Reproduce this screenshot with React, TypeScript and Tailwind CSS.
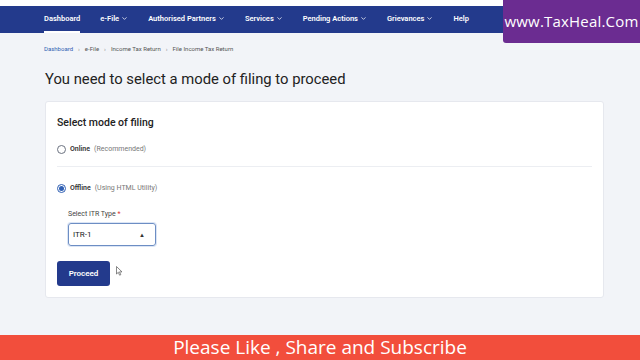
import { ChevronDown } from "lucide-react";

const navItems: { label: string; menu: boolean }[] = [
  { label: "Dashboard", menu: false },
  { label: "e-File", menu: true },
  { label: "Authorised Partners", menu: true },
  { label: "Services", menu: true },
  { label: "Pending Actions", menu: true },
  { label: "Grievances", menu: true },
  { label: "Help", menu: false },
];

const crumbs = ["Dashboard", "e-File", "Income Tax Return", "File Income Tax Return"];

function Radio({ checked }: { checked: boolean }) {
  return (
    <span
      className={`flex h-[9px] w-[9px] shrink-0 items-center justify-center rounded-full border ${
        checked ? "border-[#2f5fb3]" : "border-[#6b7280]"
      }`}
    >
      {checked && <span className="h-[5px] w-[5px] rounded-full bg-[#2f5fb3]" />}
    </span>
  );
}

export default function App() {
  return (
    <div className="relative flex h-[360px] w-[640px] flex-col overflow-hidden bg-[#f2f4f8] font-['Roboto',sans-serif]">
      <div className="h-[6px] bg-white" />
      <nav className="flex h-[27px] items-stretch gap-[20px] bg-[#233a8c] pl-[44px]">
        {navItems.map((item, i) => (
          <div
            key={item.label}
            className={`flex items-center gap-[2px] border-b-2 text-[7.5px] font-semibold text-white ${
              i === 0 ? "border-white" : "border-transparent"
            }`}
          >
            {item.label}
            {item.menu && <ChevronDown className="h-[7px] w-[7px]" strokeWidth={2.5} />}
          </div>
        ))}
      </nav>

      <div className="absolute right-0 top-0 flex h-[43px] w-[137px] items-center justify-center rounded-bl-[3px] bg-[#6b2c91]">
        <span className="font-['Open_Sans',sans-serif] text-[15px] tracking-[0.2px] text-white">
          www.TaxHeal.Com
        </span>
      </div>

      <div className="flex items-center gap-[5px] pl-[44px] pt-[11px] text-[6px] text-[#555]">
        {crumbs.map((c, i) => (
          <span key={c} className="flex items-center gap-[5px]">
            {i > 0 && <span className="text-[#888]">›</span>}
            <span className={i === 0 ? "text-[#2f5fb3]" : ""}>{c}</span>
          </span>
        ))}
      </div>

      <h1 className="pl-[45px] pt-[16px] text-[14.8px] leading-[20px] text-[#222]">
        You need to select a mode of filing to proceed
      </h1>

      <section className="ml-[45px] mt-[12px] flex h-[197px] w-[559px] flex-col rounded-[3px] border border-[#e6e8ee] bg-white px-[11px] pt-[13px]">
        <p className="text-[10.5px] font-medium text-[#222]">Select mode of filing</p>

        <label className="mt-[13px] flex items-center gap-[4px] text-[7px]">
          <Radio checked={false} />
          <span className="font-semibold text-[#333]">Online</span>
          <span className="text-[#777]">(Recommended)</span>
        </label>

        <div className="mt-[12px] h-px w-[535px] bg-[#eceef2]" />

        <label className="mt-[16px] flex items-center gap-[4px] text-[7px]">
          <Radio checked />
          <span className="font-semibold text-[#333]">Offline</span>
          <span className="text-[#777]">(Using HTML Utility)</span>
        </label>

        <div className="ml-[11px] mt-[15px] flex flex-col">
          <span className="text-[7px] text-[#444]">
            Select ITR Type <span className="text-[#d33]">*</span>
          </span>
          <div className="mt-[4px] flex h-[23px] w-[88px] items-center justify-between rounded-[3px] border border-[#6d8ec4] px-[4px] text-[8px] text-[#222] shadow-[0_0_0_1px_#dbe5f5]">
            ITR-1
            <span className="pr-[6px] text-[6px] text-[#333]">▲</span>
          </div>
        </div>

        <div className="mt-[15px] flex items-start gap-[6px]">
          <button className="flex h-[25px] w-[53px] items-center justify-center rounded-[3px] bg-[#233a8c] text-[8px] font-semibold text-white">
            Proceed
          </button>
          <svg width="7" height="10" viewBox="0 0 7 10" className="mt-[5px]">
            <path d="M0.5 0.5 L0.5 8 L2.3 6.3 L3.6 9.2 L4.8 8.7 L3.5 5.9 L6 5.9 Z" fill="white" stroke="#555" strokeWidth="0.7" />
          </svg>
        </div>
      </section>

      <div className="mt-auto flex h-[25px] items-center justify-center bg-[#f24e3c] font-['Open_Sans',sans-serif] text-[19px] text-white">
        Please Like , Share and Subscribe
      </div>
    </div>
  );
}
